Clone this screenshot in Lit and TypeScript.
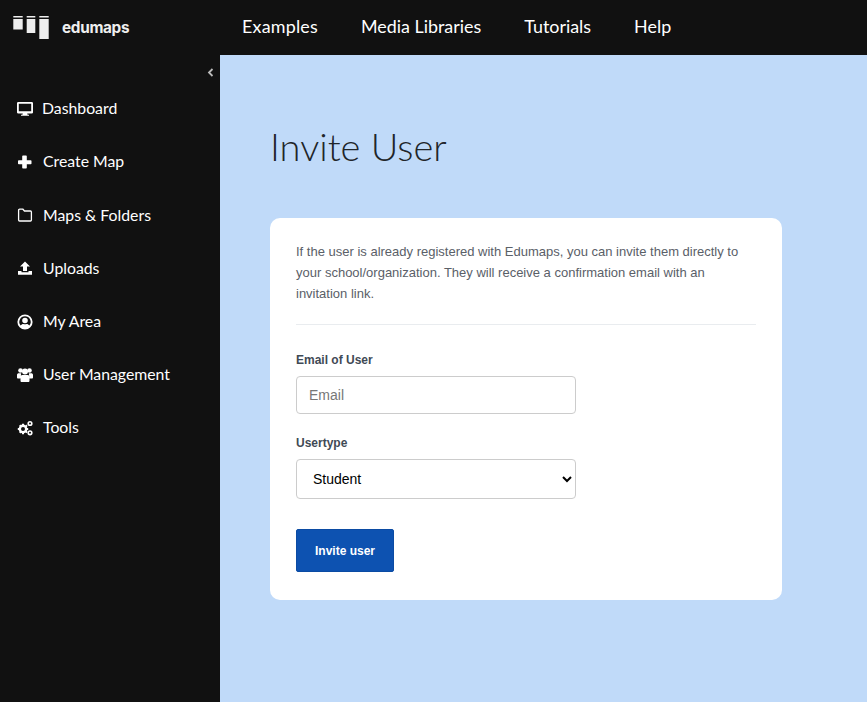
import { LitElement, html, css, svg } from "lit";
import { customElement } from "lit/decorators.js";

const icons: Record<string, unknown> = {
  monitor: svg`<path d="M1.500 2h13a1.400 1.400 0 0 1 1.500 1.500v8.500a1.400 1.400 0 0 1-1.500 1.500h-4.300l.4 1.300h1.400v1H4v-1h1.400l.4-1.300H1.500A1.400 1.400 0 0 1 0 12V3.500A1.400 1.400 0 0 1 1.500 2Zm.3 1.700v7.600h12.400V3.700Z" fill-rule="evenodd"/>`,
  plus: svg`<path d="M6 1.500h3a.8.800 0 0 1 .8.800v3.900h3.900a.8.800 0 0 1 .8.800v2.500a.8.800 0 0 1-.8.800H9.800v3.400a.8.800 0 0 1-.8.800H6a.8.800 0 0 1-.8-.8v-3.400H1.800a.8.800 0 0 1-.8-.8V7a.8.800 0 0 1 .8-.8h3.400V2.300a.8.800 0 0 1 .8-.8Z"/>`,
  folder: svg`<path d="M1.600 3.200a1 1 0 0 1 1-1h3.300l1.600 1.800h5.900a1 1 0 0 1 1 1V13a1 1 0 0 1-1 1H2.600a1 1 0 0 1-1-1Z" fill="none" stroke="currentColor" stroke-width="1.300"/>`,
  upload: svg`<path d="M8 1.500 13 6.500H10V11H6V6.500H3ZM1 11h3.500v1.200h7V11H15v3.800H1Z"/>`,
  user: svg`<path fill-rule="evenodd" d="M8 .4a7.600 7.600 0 1 1 0 15.200A7.600 7.600 0 0 1 8 .4Zm0 1.900a5.700 5.700 0 0 0-4.400 9.300C4.300 10.500 5.300 10 6.300 10c.6 0 .9.300 1.700.3s1.100-.3 1.700-.3c1 0 2 .5 2.700 1.600A5.700 5.700 0 0 0 8 2.300ZM8 3.700a2.800 2.800 0 1 1 0 5.600 2.800 2.800 0 0 1 0-5.600Z"/>`,
  users: svg`<circle cx="3.500" cy="3.500" r="2.300"/><circle cx="12.500" cy="3.500" r="2.300"/><circle cx="8" cy="4.500" r="3"/><path d="M0 7.800c0-1 .8-1.600 1.800-1.600h2.400L3.400 11.500H1.200C.5 11.500 0 11.100 0 10.500ZM16 7.800c0-1-.8-1.600-1.800-1.600h-2.400l.8 5.300h2.200c.7 0 1.200-.4 1.200-1ZM5.300 8h5.400c1.100 0 1.800.8 1.800 1.900v3.800c0 .7-.5 1.300-1.100 1.300H4.600c-.6 0-1.100-.6-1.100-1.300V9.900C3.500 8.800 4.200 8 5.300 8Z"/>`,
  cogs: svg`<circle cx="6" cy="9" r="3.200" fill="none" stroke="currentColor" stroke-width="2.400"/><path d="M5 3.800h2v2H5ZM5 12.200h2v2H5ZM.8 8h2v2h-2ZM9.200 8h2v2h-2ZM2 5.900l1.300-1.300 1.400 1.400-1.300 1.300ZM8 11.900l1.300-1.300 1.400 1.400-1.300 1.300ZM2 12.100l1.400-1.400 1.300 1.300-1.400 1.400ZM8 6l1.300-1.400 1.400 1.300-1.300 1.400Z"/><circle cx="13" cy="3.500" r="1.800" fill="none" stroke="currentColor" stroke-width="1.600"/><circle cx="13" cy="12.800" r="1.800" fill="none" stroke="currentColor" stroke-width="1.600"/>`,
};

const items: [string, string][] = [
  ["monitor", "Dashboard"],
  ["plus", "Create Map"],
  ["folder", "Maps & Folders"],
  ["upload", "Uploads"],
  ["user", "My Area"],
  ["users", "User Management"],
  ["cogs", "Tools"],
];

@customElement("app-root")
export class AppRoot extends LitElement {
  static styles = css`
    :host { display: block; height: 702px; width: 867px; overflow: hidden; background: #c0daf9; font-family: "Liberation Sans", Arial, sans-serif; }
    .top { height: 55px; background: #111; display: flex; align-items: center; color: #fff; }
    .brand { width: 242px; display: flex; align-items: center; padding-left: 13px; box-sizing: border-box; gap: 13px; }
    .logo { display: block; }
    .word { font: 700 15.300px Inter, sans-serif; letter-spacing: -0.300px; color: #eee; padding-bottom: 1px; }
    .nav { display: flex; gap: 43px; font: 400 17.900px "Lato", sans-serif; padding-bottom: 3px; }
    .nav .wide { letter-spacing: 0.200px; }
    .main { display: flex; height: 647px; }
    .side { width: 220px; background: #111; color: #fff; position: relative; padding-top: 26.200px; box-sizing: border-box; }
    .chev { position: absolute; left: 207px; top: 13px; width: 7px; height: 9px; color: #bbb; }
    .item { height: 53.200px; display: flex; align-items: center; gap: 10px; padding-left: 17px; font: 400 15.800px "Lato", sans-serif; }
    .item svg { width: 16px; height: 16px; fill: currentColor; flex: none; margin-top: 2px; }
    .item.first { gap: 9px; }
    .item.first svg { margin-top: 0; }
    .content { flex: 1; padding: 71px 85px 0 50px; min-width: 0; }
    h1 { margin: 0; font: 300 38px/40px "Lato", sans-serif; color: #212529; }
    .card { margin-top: 52px; background: #fff; border-radius: 10px; padding: 23px 26px 28px; height: 382px; box-sizing: border-box; }
    p { margin: 0; font-size: 13px; line-height: 21px; color: #5a6068; }
    hr { margin: 20px 0 27px; border: 0; border-top: 1px solid #e9ecef; }
    label { display: block; font-size: 12px; font-weight: 700; color: #3f4a55; line-height: 16px; margin-bottom: 8px; }
    input, select { display: block; box-sizing: border-box; width: 280px; border: 1px solid #ccc; border-radius: 4px; background: #fff; font-family: "Liberation Sans", Arial, sans-serif; font-size: 14px; color: #000; outline: 0; }
    input { height: 38px; padding: 0 12px; margin-bottom: 21px; }
    input::placeholder { color: #777; }
    select { height: 40px; padding: 0 12px; }
    button { display: block; margin-top: 30px; width: 98px; height: 43px; background: #0d52b1; color: #fff; border: 1px solid #0b4ba3; border-radius: 2px; font-family: "Liberation Sans", Arial, sans-serif; font-size: 12px; font-weight: 700; padding: 0; }
  `;

  render() {
    return html`
      <div class="top">
        <div class="brand">
          <svg class="logo" width="36" height="24" viewBox="0 0 36 24" fill="#eee">
            <rect x="0.300" y="0" width="9.400" height="1.500"/><rect x="0.300" y="3" width="9.400" height="10.500"/>
            <rect x="13.700" y="0" width="8.600" height="1.500"/><rect x="13.700" y="3" width="8.600" height="14"/>
            <rect x="26.300" y="0" width="9.400" height="1.500"/><rect x="26.300" y="3" width="9.400" height="20"/>
          </svg>
          <span class="word">edumaps</span>
        </div>
        <div class="nav"><span class="wide">Examples</span><span>Media Libraries</span><span>Tutorials</span><span>Help</span></div>
      </div>
      <div class="main">
        <div class="side">
          <svg class="chev" viewBox="0 0 7 9"><path d="M5.500 1 2 4.500 5.500 8" fill="none" stroke="currentColor" stroke-width="1.800"/></svg>
          ${items.map(([i, t], n) => html`<div class="item ${n === 0 ? "first" : ""}"><svg viewBox="0 0 16 16">${icons[i]}</svg><span>${t}</span></div>`)}
        </div>
        <div class="content">
          <h1>Invite User</h1>
          <div class="card">
            <p>If the user is already registered with Edumaps, you can invite them directly to your school/organization. They will receive a confirmation email with an invitation link.</p>
            <hr />
            <label>Email of User</label>
            <input placeholder="Email" />
            <label>Usertype</label>
            <select><option>Student</option></select>
            <button>Invite user</button>
          </div>
        </div>
      </div>
    `;
  }
}
